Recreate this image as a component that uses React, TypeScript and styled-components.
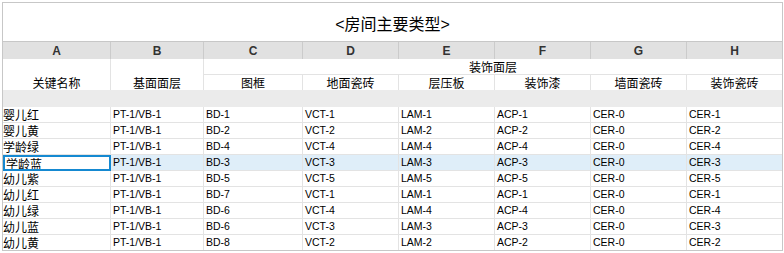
import React from "react";
import styled, { createGlobalStyle, css } from "styled-components";

const GlobalStyle = createGlobalStyle`
  html, body {
    margin: 0;
    padding: 0;
    background: #ffffff;
  }
  body {
    font-family: "Liberation Sans", "Noto Sans CJK SC", sans-serif;
    color: #000;
  }
`;

const LINE = "#c7c7c7";
const GRID = "#e3e3e3";
const CJK = `"Noto Sans CJK SC", "Liberation Sans", sans-serif`;
const LATIN = `"Liberation Sans", "Noto Sans CJK SC", sans-serif`;

const Frame = styled.div`
  box-sizing: border-box;
  width: 781px;
  margin: 2px 0 0 2px;
  border: 1px solid ${LINE};
  background: #fff;
`;

const Title = styled.div`
  box-sizing: border-box;
  height: 39px;
  border-bottom: 1px solid ${LINE};
  display: flex;
  align-items: center;
  justify-content: center;
  font-family: ${LATIN};
  font-size: 16px;
  padding-top: 1px;
`;

const Sheet = styled.div`
  display: grid;
  grid-template-columns: 108px 93px 99px 96px 96px 96px 96px 95px;
  grid-template-rows: 17px 16px 15px 17px repeat(8, 16px) 15px;
`;

const cellBase = css`
  box-sizing: border-box;
  min-width: 0;
  overflow: hidden;
  white-space: nowrap;
`;

const ColumnLetter = styled.div<{ $last?: boolean }>`
  ${cellBase};
  background: #e1e1e1;
  border-right: ${(p) => (p.$last ? "none" : `1px solid #cbcbcb`)};
  display: flex;
  align-items: center;
  justify-content: center;
  font-family: ${LATIN};
  font-weight: bold;
  font-size: 12px;
  color: #333;
`;

const FieldHead = styled.div<{ $col: number }>`
  ${cellBase};
  grid-column: ${(p) => p.$col};
  grid-row: 2 / span 2;
  border-right: 1px solid ${GRID};
  display: flex;
  align-items: flex-end;
  justify-content: center;
  font-family: ${CJK};
  font-size: 12px;
  line-height: 15px;
`;

const GroupHead = styled.div`
  ${cellBase};
  grid-column: 3 / span 6;
  grid-row: 2;
  border-bottom: 1px solid ${GRID};
  display: flex;
  align-items: center;
  justify-content: center;
  font-family: ${CJK};
  font-size: 12px;
  line-height: 15px;
`;

const SubHead = styled.div<{ $last?: boolean }>`
  ${cellBase};
  grid-row: 3;
  border-right: ${(p) => (p.$last ? "none" : `1px solid ${GRID}`)};
  display: flex;
  align-items: center;
  justify-content: center;
  font-family: ${CJK};
  font-size: 12px;
  line-height: 15px;
`;

const Spacer = styled.div`
  grid-column: 1 / -1;
  background: #ebebeb;
`;

const Cell = styled.div<{
  $key?: boolean;
  $last?: boolean;
  $lastRow?: boolean;
  $active?: boolean;
  $selected?: boolean;
}>`
  ${cellBase};
  border-right: ${(p) => (p.$last ? "none" : `1px solid ${GRID}`)};
  border-bottom: ${(p) => (p.$lastRow ? "none" : `1px solid ${GRID}`)};
  background: ${(p) => (p.$active ? "#dfeef9" : "#fff")};
  display: flex;
  align-items: center;
  padding-left: ${(p) => (p.$key ? "0" : "2px")};
  font-family: ${(p) => (p.$key ? CJK : LATIN)};
  font-size: ${(p) => (p.$key ? "12px" : "10.5px")};
  line-height: 15px;
  ${(p) =>
    p.$selected &&
    css`
      background: #fff;
      border: 2px solid #1589d1;
      padding-left: 1px;
    `}
`;

const letters = ["A", "B", "C", "D", "E", "F", "G", "H"];
const finishes = ["图框", "地面瓷砖", "层压板", "装饰漆", "墙面瓷砖", "装饰瓷砖"];

const rows: string[][] = [
  ["婴儿红", "PT-1/VB-1", "BD-1", "VCT-1", "LAM-1", "ACP-1", "CER-0", "CER-1"],
  ["婴儿黄", "PT-1/VB-1", "BD-2", "VCT-2", "LAM-2", "ACP-2", "CER-0", "CER-2"],
  ["学龄绿", "PT-1/VB-1", "BD-4", "VCT-4", "LAM-4", "ACP-4", "CER-0", "CER-4"],
  ["学龄蓝", "PT-1/VB-1", "BD-3", "VCT-3", "LAM-3", "ACP-3", "CER-0", "CER-3"],
  ["幼儿紫", "PT-1/VB-1", "BD-5", "VCT-5", "LAM-5", "ACP-5", "CER-0", "CER-5"],
  ["幼儿红", "PT-1/VB-1", "BD-7", "VCT-1", "LAM-1", "ACP-1", "CER-0", "CER-1"],
  ["幼儿绿", "PT-1/VB-1", "BD-6", "VCT-4", "LAM-4", "ACP-4", "CER-0", "CER-4"],
  ["幼儿蓝", "PT-1/VB-1", "BD-6", "VCT-3", "LAM-3", "ACP-3", "CER-0", "CER-3"],
  ["幼儿黄", "PT-1/VB-1", "BD-8", "VCT-2", "LAM-2", "ACP-2", "CER-0", "CER-2"],
];

const activeRow = 3;

export default function App() {
  return (
    <>
      <GlobalStyle />
      <Frame>
        <Title>&lt;房间主要类型&gt;</Title>
        <Sheet>
          {letters.map((l, i) => (
            <ColumnLetter key={l} $last={i === letters.length - 1}>
              {l}
            </ColumnLetter>
          ))}
          <FieldHead $col={1}>关键名称</FieldHead>
          <FieldHead $col={2}>基面面层</FieldHead>
          <GroupHead>装饰面层</GroupHead>
          {finishes.map((f, i) => (
            <SubHead key={f} $last={i === finishes.length - 1}>
              {f}
            </SubHead>
          ))}
          <Spacer />
          {rows.map((row, r) =>
            row.map((value, c) => (
              <Cell
                key={`${r}-${c}`}
                $key={c === 0}
                $last={c === row.length - 1}
                $lastRow={r === rows.length - 1}
                $active={r === activeRow}
                $selected={r === activeRow && c === 0}
              >
                {value}
              </Cell>
            ))
          )}
        </Sheet>
      </Frame>
    </>
  );
}
